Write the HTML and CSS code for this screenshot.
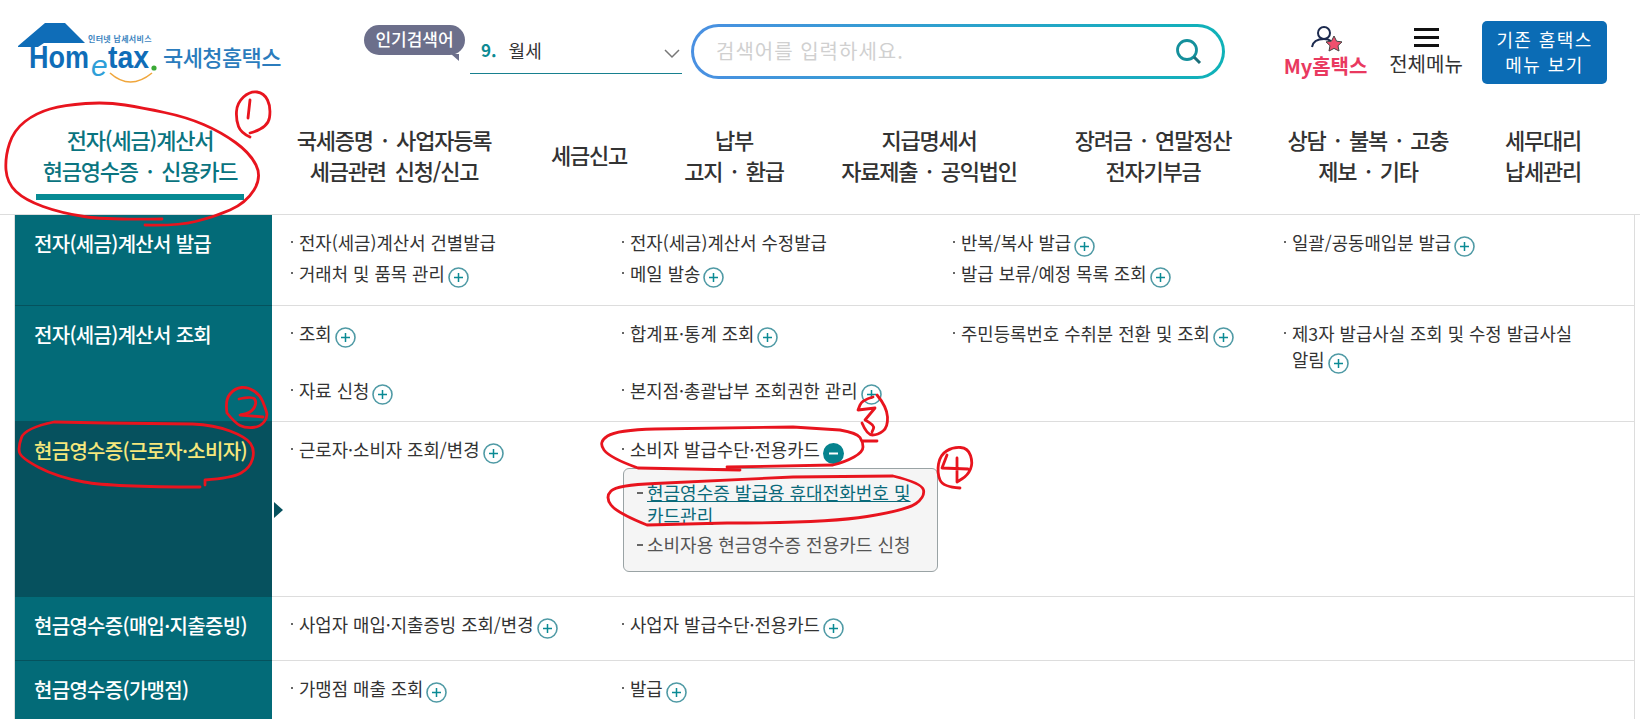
FILE: index.html
```html
<!DOCTYPE html>
<html lang="ko">
<head>
    <meta charset="UTF-8">
    <title>국세청홈택스</title>
    <link rel="stylesheet" href="styles.css">
</head>
<body>

<svg class="icon-defs" width="0" height="0">
    <symbol id="plus" viewBox="0 0 21 21">
        <circle cx="10.5" cy="10.5" r="9.5" fill="#fff" stroke="#4f9aa5" stroke-width="1.6"/>
        <path d="M10.5 6v9M6 10.5h9" stroke="#0a8a94" stroke-width="1.5"/>
    </symbol>
    <symbol id="minus" viewBox="0 0 21 21">
        <circle cx="10.5" cy="10.5" r="10.5" fill="#06838e"/>
        <path d="M6 10.5h9" stroke="#fff" stroke-width="2"/>
    </symbol>
</svg>

<header class="top-bar">
    <a class="logo">
        <svg width="282" height="95" viewBox="0 0 282 95">
            <path d="M18 46 45 23h20l20 20H44l-6 4H18z" fill="#0f6db8"/>
            <text x="88" y="42" class="logo-tiny">인터넷 납세서비스</text>
            <text x="29" y="68" class="logo-home" textLength="60" lengthAdjust="spacingAndGlyphs">Hom</text>
            <text x="91" y="76" class="logo-e">e</text>
            <text x="108" y="68" class="logo-tax" textLength="41" lengthAdjust="spacingAndGlyphs">tax</text>
            <circle cx="154" cy="68" r="2.6" fill="#3aa935"/>
            <path d="M110 73q20 18 42 0" fill="none" stroke="#f0a63c" stroke-width="1.6"/>
            <text x="163" y="66" class="logo-name">국세청홈택스</text>
        </svg>
    </a>

    <div class="hot-label">인기검색어</div>
    <div class="hot-select">
        <b>9.</b><span>월세</span>
        <svg class="chevron" width="16" height="10" viewBox="0 0 16 10"><path d="M1 1l7 7 7-7" fill="none" stroke="#777" stroke-width="1.5"/></svg>
    </div>

    <div class="search-box">
        <input type="text" placeholder="검색어를 입력하세요.">
        <svg width="28" height="28" viewBox="0 0 28 28">
            <circle cx="12" cy="12" r="9.5" fill="none" stroke="#14909c" stroke-width="2.8"/>
            <path d="M19 19l6 6" stroke="#1b6f7a" stroke-width="3"/>
        </svg>
    </div>

    <div class="my-menu">
        <svg width="34" height="28" viewBox="0 0 34 28">
            <circle cx="15" cy="8" r="6" fill="none" stroke="#1c2a4e" stroke-width="2"/>
            <path d="M3 22c1-6 6-8 12-8 3 0 5 .5 7 2" fill="none" stroke="#1c2a4e" stroke-width="2"/>
            <path d="M25 11l2.6 5.2 5.4.7-4 3.8 1 5.3-5-2.6-5 2.6 1-5.3-4-3.8 5.4-.7z" fill="#f0506e" stroke="#444" stroke-width="1"/>
        </svg>
        <span>My홈택스</span>
    </div>

    <div class="all-menu">
        <div class="burger"><i></i><i></i><i></i></div>
        <span>전체메뉴</span>
    </div>

    <a class="old-menu">기존 홈택스<br>메뉴 보기</a>
</header>

<nav class="main-nav">
    <a class="nav-item w1 active"><span>전자(세금)계산서<br>현금영수증 · 신용카드</span></a>
    <a class="nav-item w2"><span>국세증명 · 사업자등록<br>세금관련 신청/신고</span></a>
    <a class="nav-item w3"><span>세금신고</span></a>
    <a class="nav-item w4"><span>납부<br>고지 · 환급</span></a>
    <a class="nav-item w5"><span>지급명세서<br>자료제출 · 공익법인</span></a>
    <a class="nav-item w6"><span>장려금 · 연말정산<br>전자기부금</span></a>
    <a class="nav-item w7"><span>상담 · 불복 · 고충<br>제보 · 기타</span></a>
    <a class="nav-item w8"><span>세무대리<br>납세관리</span></a>
</nav>

<section class="menu-table">
    <div class="menu-row">
        <h3 class="row-title">전자(세금)계산서 발급</h3>
        <div class="row-items">
            <div class="item">전자(세금)계산서 건별발급</div>
            <div class="item">전자(세금)계산서 수정발급</div>
            <div class="item">반복/복사 발급<svg class="plus"><use href="#plus"/></svg></div>
            <div class="item">일괄/공동매입분 발급<svg class="plus"><use href="#plus"/></svg></div>
            <div class="item">거래처 및 품목 관리<svg class="plus"><use href="#plus"/></svg></div>
            <div class="item">메일 발송<svg class="plus"><use href="#plus"/></svg></div>
            <div class="item">발급 보류/예정 목록 조회<svg class="plus"><use href="#plus"/></svg></div>
        </div>
    </div>

    <div class="menu-row">
        <h3 class="row-title">전자(세금)계산서 조회</h3>
        <div class="row-items">
            <div class="item">조회<svg class="plus"><use href="#plus"/></svg></div>
            <div class="item">합계표·통계 조회<svg class="plus"><use href="#plus"/></svg></div>
            <div class="item">주민등록번호 수취분 전환 및 조회<svg class="plus"><use href="#plus"/></svg></div>
            <div class="item">제3자 발급사실 조회 및 수정 발급사실 알림<svg class="plus"><use href="#plus"/></svg></div>
            <div class="item">자료 신청<svg class="plus"><use href="#plus"/></svg></div>
            <div class="item">본지점·총괄납부 조회권한 관리<svg class="plus"><use href="#plus"/></svg></div>
        </div>
    </div>

    <div class="menu-row current">
        <h3 class="row-title">현금영수증(근로자·소비자)</h3>
        <div class="row-items">
            <div class="item">근로자·소비자 조회/변경<svg class="plus"><use href="#plus"/></svg></div>
            <div class="item-group">
                <div class="item">소비자 발급수단·전용카드<svg class="plus"><use href="#minus"/></svg></div>
                <ul class="sub-menu">
                    <li><a class="sub-link">현금영수증 발급용 휴대전화번호 및 카드관리</a></li>
                    <li>소비자용 현금영수증 전용카드 신청</li>
                </ul>
            </div>
        </div>
    </div>

    <div class="menu-row">
        <h3 class="row-title">현금영수증(매입·지출증빙)</h3>
        <div class="row-items">
            <div class="item">사업자 매입·지출증빙 조회/변경<svg class="plus"><use href="#plus"/></svg></div>
            <div class="item">사업자 발급수단·전용카드<svg class="plus"><use href="#plus"/></svg></div>
        </div>
    </div>

    <div class="menu-row">
        <h3 class="row-title">현금영수증(가맹점)</h3>
        <div class="row-items">
            <div class="item">가맹점 매출 조회<svg class="plus"><use href="#plus"/></svg></div>
            <div class="item">발급<svg class="plus"><use href="#plus"/></svg></div>
        </div>
    </div>
</section>

<!-- red pen marks drawn over the page -->
<svg class="pen-marks" width="1640" height="719" viewBox="0 0 1640 719">
    <path d="M145 225Q177 226 195.5 221.5Q214 217 230 210Q246 203 254 190Q262 177 256 165Q250 153 235.5 142.5Q221 132 203.5 124.5Q186 117 164.5 112.5Q143 108 125 105Q107 102 85.5 103.5Q64 105 50 109Q36 113 25 121.5Q14 130 9.5 143.5Q5 157 6 170Q7 183 16 191.5Q25 200 43 206.5Q61 213 84 216.5Q107 220 162 219"/>
    <path d="M250 100L248 118M250 133Q268 128 269.5 117.5Q271 107 267.5 100Q264 93 257 92Q250 91 243.5 97Q237 103 236.5 111.5Q236 120 238.5 126.5Q241 133 250 137"/>
    <path d="M205 485L205 480Q232 478 241 473Q250 468 252.5 459Q255 450 250.5 443.5Q246 437 230 431Q214 425 192.5 424L107 423L54 422Q25 428 21.5 437.5Q18 447 19.5 452.5Q21 458 39 467.5Q57 477 84 482Q111 487 200 487"/>
    <path d="M227 413Q225 400 230 394Q235 388 241.5 387.5Q248 387 254 391Q260 395 262.5 401Q265 407 266.5 412Q268 417 264 422Q260 427 252.5 427.5Q245 428 240 425.5Q235 423 227 413M239 399Q252 396 254.5 399Q257 402 254.5 407Q252 412 246 413.5L240 415L263 417"/>
    <path d="M740 470L638 468Q610 458 604 450Q598 442 607.5 436Q617 430 655 429L793 427L840 430Q857 433 860 437.5Q863 442 863 447Q863 452 854 457Q845 462 833 465L727 467"/>
    <path d="M863 441L877 441"/>
    <path d="M877 395Q887 407 887.5 417Q888 427 883 431Q878 435 872.5 435Q867 435 862 423M873 397Q862 400 860 405L858 410L875 408L865 420Q875 425 873.5 428.5L872 432"/>
    <path d="M727 523L647 525Q617 513 611 505Q605 497 611 491Q617 485 655 483.5L793 477L893 476Q922 483 923.5 490Q925 497 916 503.5Q907 510 867 516.5Q827 523 727 523"/>
    <path d="M960 488Q943 487 940 480Q937 473 938.5 464Q940 455 946.5 451Q953 447 960.5 447.5Q968 448 970.5 455.5Q973 463 970.5 469Q968 475 962.5 478.5L957 482M947 455L942 468L968 469M957 458L957 482"/>
</svg>

</body>
</html>
```

FILE: styles.css
```css
* {
    box-sizing: border-box;
}

html, body {
    margin: 0;
    padding: 0;
    height: 719px;
    overflow: hidden;
}

body {
    position: relative;
    font-family: "Noto Sans CJK KR", "Noto Sans", sans-serif;
    background: #fff;
    color: #333;
}

.icon-defs {
    position: absolute;
}

/* top bar */
.top-bar {
    display: flex;
    align-items: flex-start;
    height: 105px;
}

.logo {
    display: block;
    height: 95px;
}

.logo-tiny {
    font-size: 8px;
    font-weight: 700;
    fill: #3d85c0;
    letter-spacing: 0.3px;
}

.logo-home, .logo-tax {
    font-family: "Liberation Sans", sans-serif;
    font-weight: 700;
    font-size: 31px;
    fill: #0f6db8;
}

.logo-e {
    font-family: "Liberation Sans", sans-serif;
    font-style: italic;
    font-size: 30px;
    fill: #2f9fd8;
}

.logo-name {
    font-size: 22px;
    font-weight: 500;
    fill: #2b7cbd;
    letter-spacing: -0.6px;
}

.hot-label {
    position: relative;
    margin: 25px 0 0 82px;
    width: 101px;
    height: 30px;
    border-radius: 15px;
    background: #6c6f8b;
    color: #fff;
    font-size: 17px;
    font-weight: 500;
    line-height: 28px;
    text-align: center;
    white-space: nowrap;
}

.hot-label::after {
    content: "";
    position: absolute;
    right: 6px;
    bottom: -6px;
    border-top: 7px solid #6c6f8b;
    border-left: 8px solid transparent;
}

.hot-select {
    display: flex;
    align-items: center;
    margin: 30px 0 0 5px;
    padding: 0 0 4px 11px;
    width: 212px;
    height: 44px;
    border-bottom: 1px solid #17808f;
    font-size: 18px;
}

.hot-select b {
    color: #0d8a94;
    font-size: 17px;
    margin-right: 12px;
}

.chevron {
    margin-left: auto;
    margin-right: 2px;
    margin-top: 8px;
}

.search-box {
    display: flex;
    align-items: center;
    margin: 24px 0 0 9px;
    padding: 0 19px 0 22px;
    width: 534px;
    height: 55px;
    border: 3px solid transparent;
    border-radius: 28px;
    background: linear-gradient(#fff, #fff) padding-box, linear-gradient(90deg, #4a90e2, #0fb2b8) border-box;
}

.search-box input {
    flex: 1;
    border: none;
    outline: none;
    padding: 0 0 2px;
    font-family: inherit;
    font-size: 20px;
    letter-spacing: 1px;
    background: none;
}

.search-box input::placeholder {
    color: #d0d0d0;
}

.my-menu {
    display: flex;
    flex-direction: column;
    align-items: center;
    margin: 25px 0 0 59px;
    width: 83px;
}

.my-menu span {
    color: #e9395f;
    font-size: 20px;
    font-weight: 700;
    line-height: 26px;
    white-space: nowrap;
}

.all-menu {
    display: flex;
    flex-direction: column;
    align-items: center;
    margin: 28px 0 0 22px;
    width: 74px;
}

.all-menu span {
    margin-top: 4px;
    font-size: 20px;
    line-height: 26px;
    white-space: nowrap;
}

.burger {
    display: flex;
    flex-direction: column;
    justify-content: space-between;
    width: 25px;
    height: 19px;
}

.burger i {
    display: block;
    height: 3px;
    background: #111;
}

.old-menu {
    display: block;
    margin: 21px 0 0 19px;
    width: 125px;
    height: 63px;
    padding-top: 6px;
    border-radius: 5px;
    background: #0b6cb5;
    color: #fff;
    font-size: 18px;
    line-height: 25px;
    letter-spacing: 1.4px;
    text-align: center;
}

/* main navigation */
.main-nav {
    display: flex;
    height: 110px;
    padding-left: 36px;
    border-bottom: 1px solid #ddd;
}

.nav-item {
    display: flex;
    justify-content: center;
    padding-top: 19px;
    text-align: center;
    font-size: 22px;
    font-weight: 500;
    line-height: 31px;
    letter-spacing: -1.2px;
    word-spacing: 4px;
    color: #333;
    white-space: nowrap;
}

.nav-item span {
    display: block;
}

.nav-item.w3 {
    padding-top: 34px;
}

.w1 { width: 224px; justify-content: flex-start; }
.w2 { width: 268px; }
.w3 { width: 122px; }
.w4 { width: 168px; }
.w5 { width: 222px; }
.w6 { width: 226px; }
.w7 { width: 204px; }
.w8 { width: 146px; }

.nav-item.active {
    color: #0a7480;
}

.nav-item.active span {
    width: 208px;
    height: 76px;
    border-bottom: 6px solid #078b94;
}

/* menu table */
.menu-table {
    margin-left: 14px;
    width: 1621px;
    border-left: 1px solid #ddd;
    border-right: 1px solid #ddd;
}

.menu-row {
    display: flex;
    min-height: 64px;
    border-bottom: 1px solid #ddd;
}

.row-title {
    position: relative;
    flex: none;
    margin: 0 0 -1px;
    padding: 14px 0 0 19px;
    width: 257px;
    background: #036b78;
    border-bottom: 1px solid #05525d;
    color: #fff;
    font-size: 20px;
    font-weight: 500;
    line-height: 30px;
    letter-spacing: -0.7px;
    white-space: nowrap;
}

.current .row-title {
    background: #06515e;
    color: #f6e77c;
}

.current .row-title::after {
    content: "";
    position: absolute;
    left: 259px;
    top: 80px;
    border-left: 9px solid #06515e;
    border-top: 8px solid transparent;
    border-bottom: 8px solid transparent;
}

.row-items {
    flex: 1;
    display: grid;
    grid-template-columns: repeat(4, 331px);
    align-content: start;
    row-gap: 5px;
    padding: 14px 0 18px 19px;
}

.menu-row:first-child .row-items {
    padding-bottom: 19px;
}

.item {
    padding: 0 30px 0 8px;
    text-indent: -8px;
    font-size: 17.8px;
    line-height: 26px;
    color: #333;
    word-break: keep-all;
}

.item::before {
    content: "";
    display: inline-block;
    width: 2px;
    height: 2px;
    margin: 0 6px 7px 0;
    vertical-align: middle;
    background: #666;
}

.plus {
    width: 21px;
    height: 21px;
    margin: -2px 0 -2px 3px;
    vertical-align: -4.5px;
}

.sub-menu {
    list-style: none;
    margin: 6px 0 6px 1px;
    padding: 12px 10px 15px 23px;
    width: 315px;
    height: 104px;
    border: 1px solid #9aa3a5;
    border-radius: 6px;
    background: #f5f5f5;
    color: #555;
    font-size: 18px;
    line-height: 22.5px;
    word-break: keep-all;
}

.sub-menu li {
    position: relative;
    margin-bottom: 7px;
}

.sub-menu li::before {
    content: "";
    position: absolute;
    left: -10px;
    top: 11px;
    width: 6px;
    height: 2px;
    background: #666;
}

.sub-link {
    color: #0a6a7a;
    text-decoration: underline;
}

/* red pen overlay */
.pen-marks {
    position: absolute;
    top: 0;
    left: 0;
    pointer-events: none;
}

.pen-marks path {
    fill: none;
    stroke: #e8141e;
    stroke-width: 2.8;
    stroke-linejoin: round;
    stroke-linecap: round;
}
```
